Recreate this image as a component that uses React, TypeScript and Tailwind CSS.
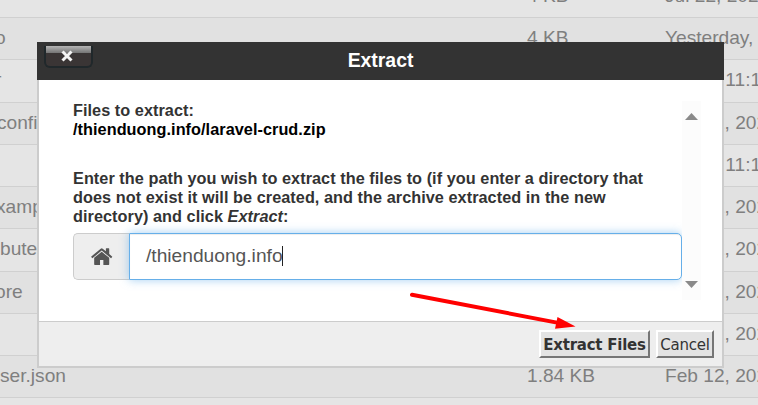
type Row = { name: string; shift: string; size: string; date: string; height: string };

const rows: Row[] = [
  { name: "", shift: "", size: "4 KB", date: "Jul 22, 2022", height: "h-[42px]" },
  { name: "o", shift: "-ml-[5px]", size: "4 KB", date: "Yesterday, 10:02", height: "h-[42px]" },
  { name: "r", shift: "-ml-[5px]", size: "", date: "Today, 11:12", height: "h-[43px]" },
  { name: "confi", shift: "-ml-[3px]", size: "", date: "Feb 12, 2023", height: "h-[42px]" },
  { name: "", shift: "", size: "", date: "Today, 11:12", height: "h-[42px]" },
  { name: "xamp", shift: "-ml-[4px]", size: "", date: "Feb 12, 2023", height: "h-[42px]" },
  { name: "bute", shift: "ml-0", size: "", date: "Feb 12, 2023", height: "h-[43px]" },
  { name: "ore", shift: "-ml-[5px]", size: "", date: "Feb 12, 2023", height: "h-[42px]" },
  { name: "", shift: "", size: "", date: "Feb 12, 2023", height: "h-[42px]" },
  { name: "ser.json", shift: "ml-0", size: "1.84 KB", date: "Feb 12, 2023", height: "h-[42px]" },
  { name: "", shift: "", size: "", date: "", height: "h-[42px]" },
];

function FileTable() {
  return (
    <div className="-mt-[24px] text-[19.15px] leading-[39px] text-[#7f7f7f]">
      {rows.map((row, i) => (
        <div
          key={i}
          className={`flex border-b border-[#d0d0d0] whitespace-nowrap ${row.height} ${i % 2 ? "bg-[#e1e1e1]" : "bg-[#e5e5e5]"}`}
        >
          <div className="w-[527px] shrink-0">
            <div className={row.shift}>{row.name}</div>
          </div>
          <div className="w-[138px] shrink-0">{row.size}</div>
          <div className="shrink-0">{row.date}</div>
        </div>
      ))}
    </div>
  );
}

function HomeIcon() {
  return (
    <svg viewBox="0 0 1792 1792" className="size-[23.4px]" fill="#555">
      <path d="M1472 992v480q0 26-19 45t-45 19h-384v-384h-256v384h-384q-26 0-45-19t-19-45v-480q0-1 .5-3t.5-3l575-474 575 474q1 2 1 6zm223-69l-62 74q-8 9-21 11h-3q-13 0-21-7l-692-577-692 577q-12 8-24 7-13-2-21-11l-62-74q-8-10-7-23.5t11-21.5l719-599q32-26 76-26t76 26l244 204v-195q0-14 9-23t23-9h192q14 0 23 9t9 23v408l219 182q10 8 11 21.5t-7 23.5z" />
    </svg>
  );
}

function CloseButton() {
  return (
    <button className="ml-[7px] mt-1 flex h-[22px] w-[49px] justify-center rounded-b-[6px] border-x-2 border-b-2 border-[#20282b] bg-linear-to-b from-[#b4b4b4] from-0% via-[#777] via-34% to-[#3a3535] to-36%">
      <svg viewBox="0 0 12 12" className="-ml-[3px] mt-[4px] size-3" stroke="#f4f4f4" strokeWidth="3">
        <path d="M1.5 1.5 10.5 10.5M10.5 1.5 1.5 10.5" />
      </svg>
    </button>
  );
}

function Dialog() {
  return (
    <div className="absolute left-[37px] top-[42px] flex h-[326px] w-[687px] flex-col">
      <header className="grid h-[38px] shrink-0 grid-cols-[1fr_auto_1fr] bg-[#333]">
        <CloseButton />
        <h1 className="text-[19.4px] leading-[37px] font-bold text-white">Extract</h1>
      </header>
      <div className="flex flex-1 flex-col border-x-2 border-b-2 border-[#ccc] bg-white">
        <div className="flex h-[241px] pl-[34px] pt-[21px]">
          <div className="flex w-[609px] flex-col text-[16.25px] leading-[19px] font-bold tracking-[0.05px] text-[#333]">
            <p className="whitespace-nowrap">
              Files to extract:
              <br />
              <span className="text-black">/thienduong.info/laravel-crud.zip</span>
            </p>
            <p className="mt-[30px] whitespace-nowrap">
              Enter the path you wish to extract the files to (if you enter a directory that
              <br />
              does not exist it will be created, and the archive extracted in the new
              <br />
              directory) and click <em>Extract</em>:
            </p>
            <div className="mt-[7px] flex h-[47px] font-normal tracking-normal">
              <div className="flex w-[56px] items-center justify-center rounded-l-[5px] border border-r-0 border-[#ccc] bg-[#eee]">
                <HomeIcon />
              </div>
              <div className="flex flex-1 items-center rounded-r-[5px] border border-[#66afe9] bg-white pl-4 text-[19.2px] text-[#555] shadow-[inset_0_1px_1px_rgba(0,0,0,0.075),0_0_10px_rgba(102,175,233,0.6)]">
                <span className="-mt-[2px]">/thienduong.info</span>
                <span className="-ml-px -mt-[1px] h-5 w-px bg-[#222]" />
              </div>
            </div>
          </div>
          <div className="flex h-[199px] w-[19px] flex-col items-center justify-between bg-[#fcfcfc] pb-3 pt-3">
            <svg viewBox="0 0 13 7" className="h-[7px] w-[13px]" fill="#8a8a8a">
              <path d="M0 7 6.5 0 13 7z" />
            </svg>
            <svg viewBox="0 0 13 7" className="h-[7px] w-[13px]" fill="#8a8a8a">
              <path d="M0 0H13L6.5 7z" />
            </svg>
          </div>
        </div>
        <footer className="flex flex-1 justify-end gap-[6px] border-t border-[#ccc] bg-[#eee] pr-2 pt-2 font-['DejaVu_Sans',sans-serif] text-[#333]">
          <button className="h-7 w-[111px] border-2 border-b-[#767676] border-l-white border-r-[#767676] border-t-white bg-[#e3e3e3] pt-px text-[15px] leading-[24px] font-bold tracking-[-0.25px] whitespace-nowrap">
            Extract Files
          </button>
          <button className="h-7 w-[58px] border-2 border-b-[#767676] border-l-white border-r-[#767676] border-t-white bg-[#e3e3e3] pt-px text-[15px] leading-[24px] tracking-[-0.25px] whitespace-nowrap">
            Cancel
          </button>
        </footer>
      </div>
    </div>
  );
}

export default function App() {
  return (
    <div className="relative h-[405px] w-[758px] overflow-hidden bg-[#e5e5e5] font-['Liberation_Sans',Arial,sans-serif]">
      <FileTable />
      <Dialog />
      <svg viewBox="0 0 170 40" className="absolute left-[408px] top-[290px] h-[40px] w-[170px]" fill="red">
        <path d="M4 4.7 149 32.6" stroke="red" strokeWidth="4" strokeLinecap="round" />
        <path d="M149.5 27 167.5 36.4 147 38.7z" />
      </svg>
    </div>
  );
}
